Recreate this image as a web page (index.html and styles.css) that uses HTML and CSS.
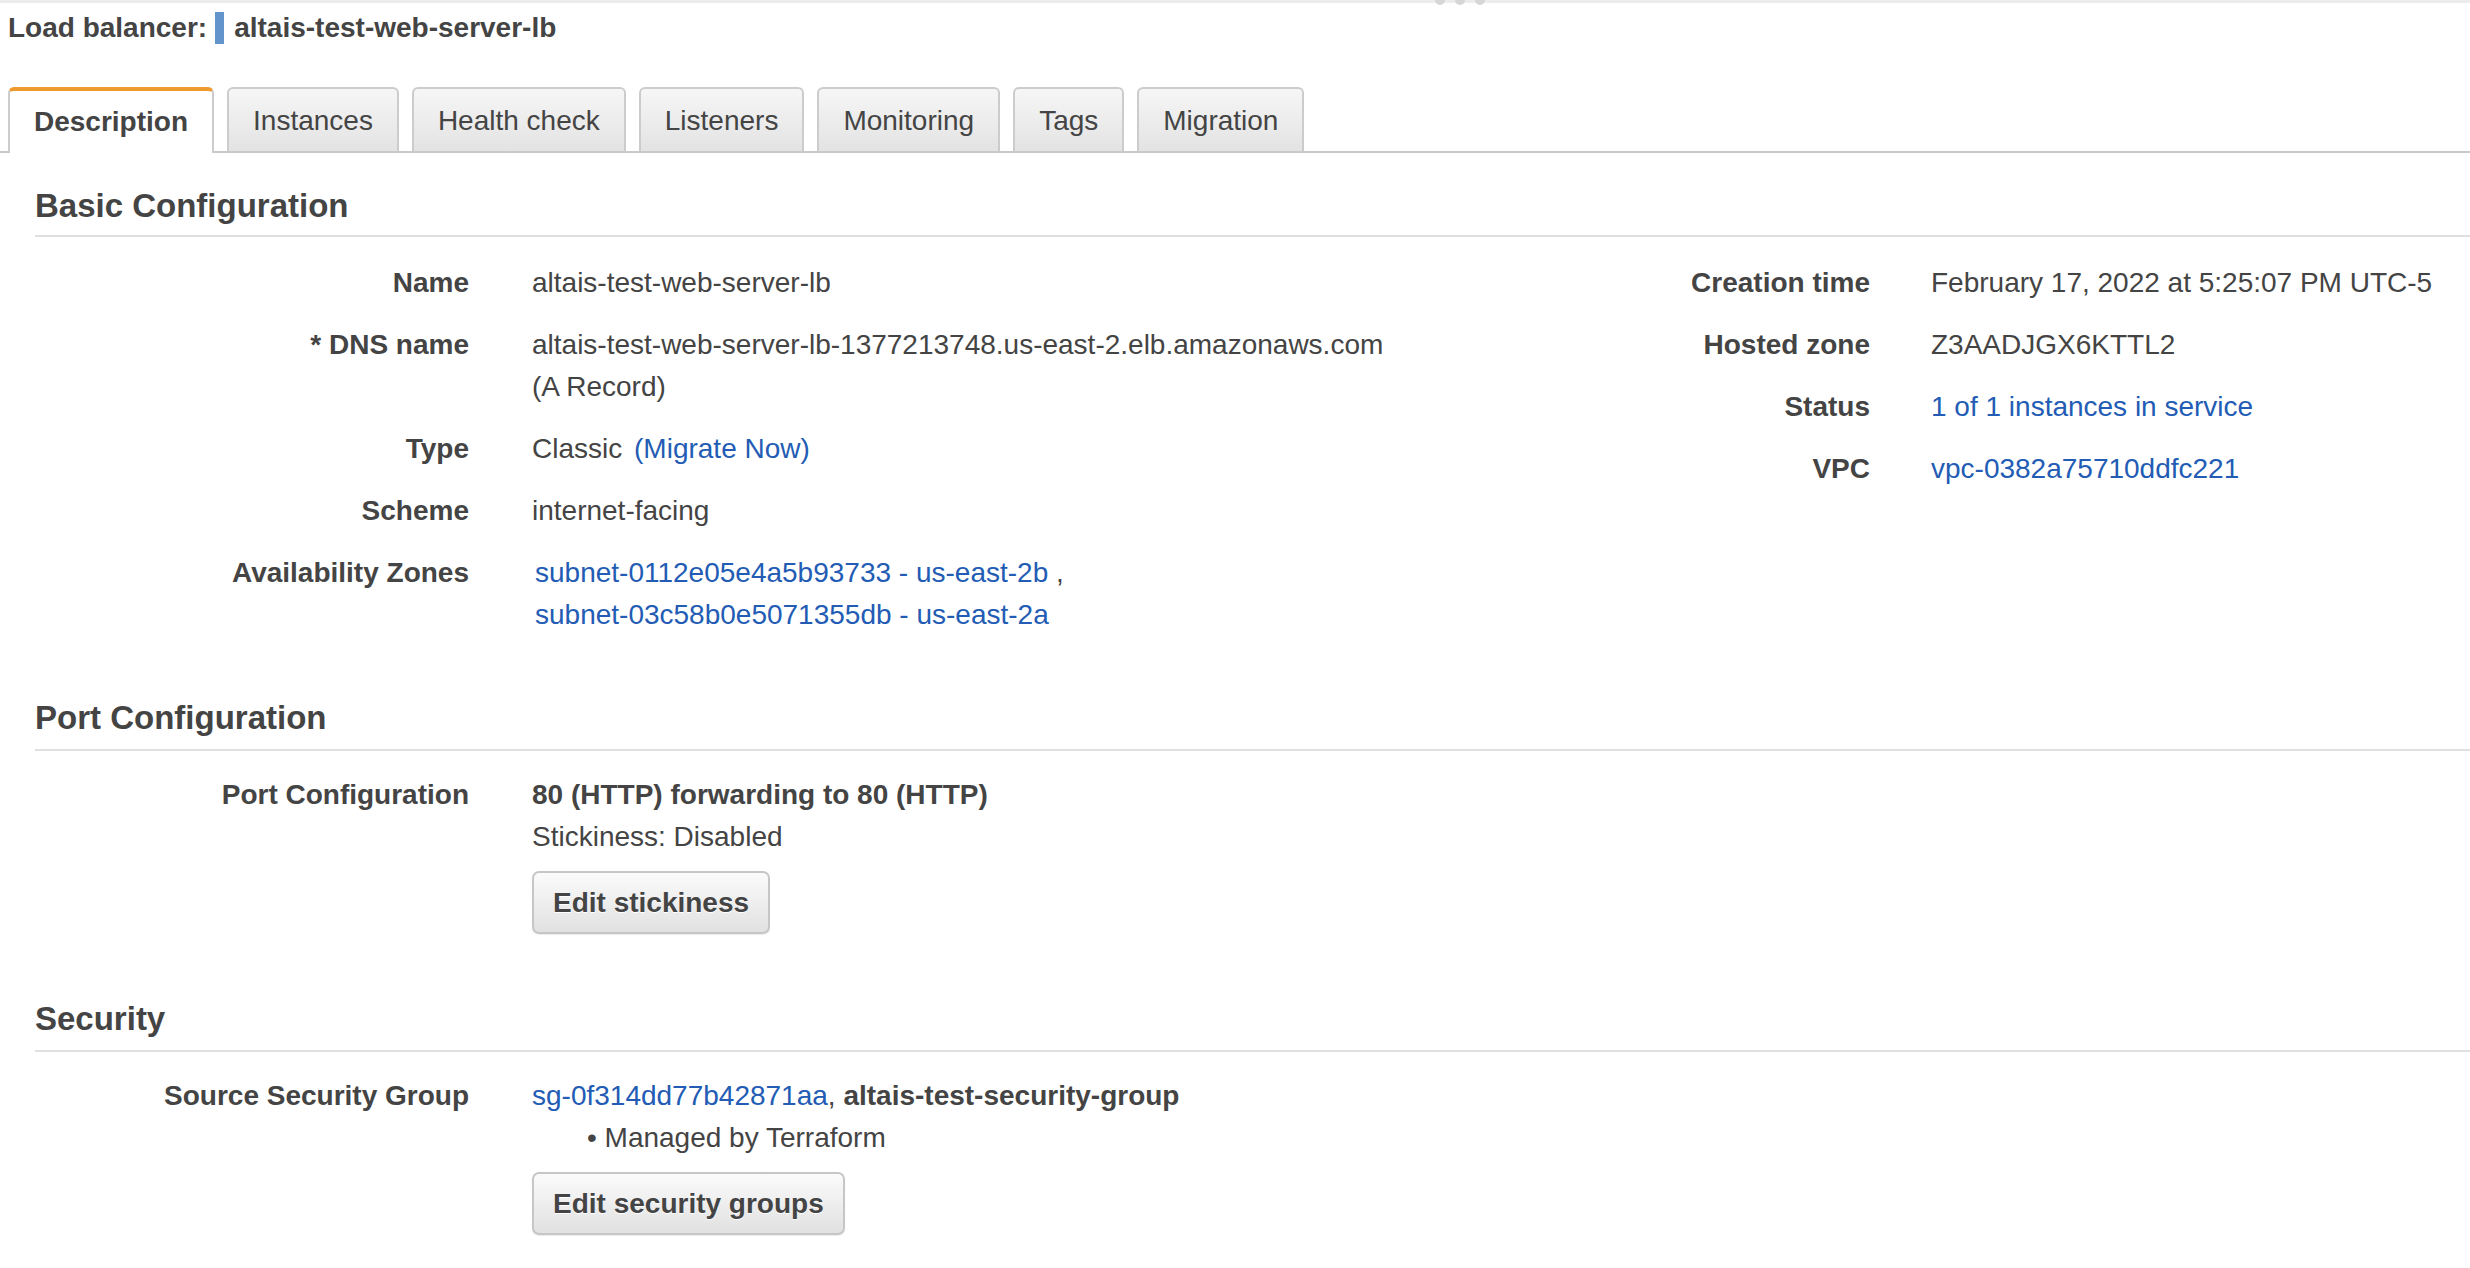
FILE: index.html
```html
<!DOCTYPE html>
<html lang="en">
<head>
<meta charset="utf-8">
<title>Load balancer: altais-test-web-server-lb</title>
<link rel="stylesheet" href="styles.css">
</head>
<body>
<div class="topbar">
  <div class="grip"><span></span><span></span><span></span></div>
</div>
<div class="lb-title">
  <span class="lb-label">Load balancer:</span>
  <span class="lb-marker"></span>
  <span class="lb-name">altais-test-web-server-lb</span>
</div>
<div class="tabs">
  <div class="tab active">Description</div>
  <div class="tab">Instances</div>
  <div class="tab">Health check</div>
  <div class="tab">Listeners</div>
  <div class="tab">Monitoring</div>
  <div class="tab">Tags</div>
  <div class="tab">Migration</div>
</div>
<div class="content">
  <section class="section">
    <h2 class="section-title">Basic Configuration</h2>
    <div class="columns">
      <dl class="props props-left">
        <dt>Name</dt>
        <dd>altais-test-web-server-lb</dd>
        <dt>* DNS name</dt>
        <dd>altais-test-web-server-lb-1377213748.us-east-2.elb.amazonaws.com<br>(A Record)</dd>
        <dt>Type</dt>
        <dd>Classic <a class="link migrate" href="#">(Migrate Now)</a></dd>
        <dt>Scheme</dt>
        <dd>internet-facing</dd>
        <dt>Availability Zones</dt>
        <dd class="zones"><a class="link" href="#">subnet-0112e05e4a5b93733 - us-east-2b</a> ,<br><a class="link" href="#">subnet-03c58b0e5071355db - us-east-2a</a></dd>
      </dl>
      <dl class="props props-right">
        <dt>Creation time</dt>
        <dd>February 17, 2022 at 5:25:07 PM UTC-5</dd>
        <dt>Hosted zone</dt>
        <dd>Z3AADJGX6KTTL2</dd>
        <dt>Status</dt>
        <dd><a class="link" href="#">1 of 1 instances in service</a></dd>
        <dt>VPC</dt>
        <dd><a class="link" href="#">vpc-0382a75710ddfc221</a></dd>
      </dl>
    </div>
  </section>

  <section class="section">
    <h2 class="section-title">Port Configuration</h2>
    <dl class="props props-left">
      <dt>Port Configuration</dt>
      <dd>
        <div class="strong">80 (HTTP) forwarding to 80 (HTTP)</div>
        <div>Stickiness: Disabled</div>
        <button class="btn" type="button">Edit stickiness</button>
      </dd>
    </dl>
  </section>

  <section class="section">
    <h2 class="section-title">Security</h2>
    <dl class="props props-left">
      <dt>Source Security Group</dt>
      <dd>
        <div><a class="link" href="#">sg-0f314dd77b42871aa</a>, <span class="strong">altais-test-security-group</span></div>
        <div class="managed">&bull; Managed by Terraform</div>
        <button class="btn" type="button">Edit security groups</button>
      </dd>
    </dl>
  </section>
</div>
</body>
</html>
```

FILE: styles.css
```css
* {
  box-sizing: border-box;
}

html, body {
  margin: 0;
  padding: 0;
  background: #ffffff;
}

body {
  font-family: "Liberation Sans", Arial, Helvetica, sans-serif;
  font-size: 28px;
  line-height: 42px;
  color: #444444;
  width: 2470px;
  overflow: hidden;
}

.topbar {
  position: relative;
  height: 3px;
  background: #ececec;
}

.grip {
  position: absolute;
  left: 1435px;
  top: -5px;
  display: flex;
  gap: 10px;
}

.grip span {
  width: 10px;
  height: 10px;
  border-radius: 50%;
  background: #d6d6d6;
}

.lb-title {
  display: flex;
  align-items: center;
  margin-top: 4px;
  padding-left: 8px;
  height: 42px;
  font-weight: bold;
}

.lb-marker {
  width: 9px;
  height: 32px;
  margin: 0 10px 0 8px;
  background: #6394cc;
}

.tabs {
  display: flex;
  align-items: flex-end;
  gap: 13px;
  margin-top: 38px;
  padding-left: 8px;
  border-bottom: 2px solid #c9c9c9;
}

.tab {
  display: flex;
  align-items: center;
  height: 64px;
  padding: 2px 24px 0;
  border: 2px solid #cccccc;
  border-bottom: 0;
  border-radius: 6px 6px 0 0;
  background: linear-gradient(#f6f6f6, #e3e3e3);
  color: #444444;
}

.tab.active {
  height: 66px;
  margin-bottom: -2px;
  padding: 0 24px;
  background: #ffffff;
  border-top: 4px solid #ee9a2e;
  font-weight: bold;
}

.content {
  padding-left: 35px;
}

.section-title {
  margin: 62px 0 0;
  padding-bottom: 11px;
  font-size: 33px;
  line-height: 40px;
  font-weight: bold;
  color: #444444;
  border-bottom: 2px solid #e0e0e0;
}

.section:first-child .section-title {
  margin-top: 33px;
  padding-bottom: 9px;
}

.columns {
  display: flex;
}

.props {
  display: grid;
  grid-template-columns: 434px 1fr;
  column-gap: 63px;
  row-gap: 20px;
  margin: 23px 0 0;
  align-content: start;
}

.section:first-child .props {
  margin-top: 25px;
}

.props-left {
  flex: 0 0 1401px;
}

.props-right {
  flex: 1 1 auto;
  column-gap: 61px;
}

.props dt {
  text-align: right;
  font-weight: bold;
  white-space: nowrap;
}

.props dd {
  margin: 0;
  white-space: nowrap;
}

.link {
  color: #235cb4;
  text-decoration: none;
}

.migrate {
  margin-left: 4px;
}

.zones .link {
  margin-left: 3px;
}

.strong {
  font-weight: bold;
}

.managed {
  padding-left: 55px;
}

.btn {
  display: block;
  height: 63px;
  margin: 13px 0 3px;
  padding: 0 19px;
  font: inherit;
  font-weight: bold;
  line-height: 1;
  color: #444444;
  text-shadow: 0 1px 0 #ffffff;
  background: linear-gradient(#fbfbfb, #e1e1e1);
  border: 2px solid #c6c6c6;
  border-radius: 7px;
  box-shadow: 0 1px 1px rgba(0, 0, 0, 0.08);
}
```
